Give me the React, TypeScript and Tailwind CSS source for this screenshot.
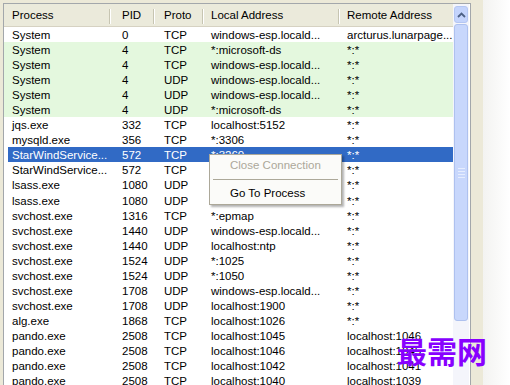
import React from "react";

type Row = {
  proc: string;
  pid: string;
  proto: string;
  local: string;
  remote: string;
  tone?: "green" | "selected";
};

const rows: Row[] = [
  { proc: "System", pid: "0", proto: "TCP", local: "windows-esp.locald...", remote: "arcturus.lunarpage..." },
  { proc: "System", pid: "4", proto: "TCP", local: "*:microsoft-ds", remote: "*:*", tone: "green" },
  { proc: "System", pid: "4", proto: "TCP", local: "windows-esp.locald...", remote: "*:*", tone: "green" },
  { proc: "System", pid: "4", proto: "UDP", local: "windows-esp.locald...", remote: "*:*", tone: "green" },
  { proc: "System", pid: "4", proto: "UDP", local: "windows-esp.locald...", remote: "*:*", tone: "green" },
  { proc: "System", pid: "4", proto: "UDP", local: "*:microsoft-ds", remote: "*:*", tone: "green" },
  { proc: "jqs.exe", pid: "332", proto: "TCP", local: "localhost:5152", remote: "*:*" },
  { proc: "mysqld.exe", pid: "356", proto: "TCP", local: "*:3306", remote: "*:*" },
  { proc: "StarWindService...", pid: "572", proto: "TCP", local: "*:3260", remote: "*:*", tone: "selected" },
  { proc: "StarWindService...", pid: "572", proto: "TCP", local: "*:3261", remote: "*:*" },
  { proc: "lsass.exe", pid: "1080", proto: "UDP", local: "*:500", remote: "*:*" },
  { proc: "lsass.exe", pid: "1080", proto: "UDP", local: "*:4500", remote: "*:*" },
  { proc: "svchost.exe", pid: "1316", proto: "TCP", local: "*:epmap", remote: "*:*" },
  { proc: "svchost.exe", pid: "1440", proto: "UDP", local: "windows-esp.locald...", remote: "*:*" },
  { proc: "svchost.exe", pid: "1440", proto: "UDP", local: "localhost:ntp", remote: "*:*" },
  { proc: "svchost.exe", pid: "1524", proto: "UDP", local: "*:1025", remote: "*:*" },
  { proc: "svchost.exe", pid: "1524", proto: "UDP", local: "*:1050", remote: "*:*" },
  { proc: "svchost.exe", pid: "1708", proto: "UDP", local: "windows-esp.locald...", remote: "*:*" },
  { proc: "svchost.exe", pid: "1708", proto: "UDP", local: "localhost:1900", remote: "*:*" },
  { proc: "alg.exe", pid: "1868", proto: "TCP", local: "localhost:1026", remote: "*:*" },
  { proc: "pando.exe", pid: "2508", proto: "TCP", local: "localhost:1045", remote: "localhost:1046" },
  { proc: "pando.exe", pid: "2508", proto: "TCP", local: "localhost:1046", remote: "localhost:1045" },
  { proc: "pando.exe", pid: "2508", proto: "TCP", local: "localhost:1042", remote: "localhost:1041" },
  { proc: "pando.exe", pid: "2508", proto: "TCP", local: "localhost:1040", remote: "localhost:1039" },
];

function HeaderCell({ label, pad, divider = true }: { label: string; pad: string; divider?: boolean }) {
  return (
    <div className={`flex items-center justify-between pt-[2px] ${pad}`}>
      <span>{label}</span>
      {divider && <span className="w-[2px] h-[15px] border-l border-[#c7c5b2] border-r border-r-white" />}
    </div>
  );
}

function DataRow({ row }: { row: Row }) {
  const selected = row.tone === "selected";
  const tone = selected
    ? "ml-[4px] grid-cols-[103px_44px_49px_136px_109px] bg-[#316ac5] text-white"
    : row.tone === "green"
    ? "grid-cols-[107px_44px_49px_136px_113px] bg-[#e4f8de] text-black"
    : "grid-cols-[107px_44px_49px_136px_113px] text-black";
  return (
    <div className={`grid shrink-0 h-[15.05px] leading-[17px] whitespace-nowrap ${tone}`}>
      <div className={`overflow-hidden ${selected ? "pl-[4px]" : "pl-[8px]"}`}>{row.proc}</div>
      <div className="overflow-hidden pl-[11px]">{row.pid}</div>
      <div className="overflow-hidden pl-[9px]">{row.proto}</div>
      <div className="overflow-hidden pl-[7px]">{row.local}</div>
      <div className="overflow-hidden pl-[7px]">{row.remote}</div>
    </div>
  );
}

function Scrollbar() {
  return (
    <div className="w-[17px] shrink-0 bg-[#f4f5fb] flex flex-col px-[1px] pt-[2px] border-r border-r-white">
      {/* up button */}
      <div className="shrink-0 h-[17px] rounded-[3px] border border-[#b4c6f2] bg-[#c4d4fc] flex items-center justify-center">
        <svg width="9" height="6" viewBox="0 0 9 6">
          <path d="M1 5 L4.5 1.5 L8 5" fill="none" stroke="#4d6185" strokeWidth="1.8" />
        </svg>
      </div>
      {/* thumb */}
      <div className="shrink-0 mt-[1px] h-[297px] rounded-[3px] border border-[#aec1ef] bg-[#c8d7fc] flex flex-col items-center justify-center gap-[2px]">
        <span className="w-[7px] h-px bg-[#e6edfe]" />
        <span className="w-[7px] h-px bg-[#e6edfe]" />
        <span className="w-[7px] h-px bg-[#e6edfe]" />
        <span className="w-[7px] h-px bg-[#e6edfe]" />
      </div>
    </div>
  );
}

export default function App() {
  return (
    <div className="relative w-[510px] h-[385px] overflow-hidden flex bg-[#ece9d8] font-['Liberation_Sans',Arial,sans-serif] text-[11.5px] text-black">
      <div className="w-[3px] shrink-0" />

      {/* list frame */}
      <div className="mt-[3px] w-[468px] shrink-0 flex border-l border-t border-r border-[#a3a7ab] bg-white">
        <div className="w-[449px] shrink-0 flex flex-col overflow-hidden">
          <div className="grid shrink-0 grid-cols-[107px_44px_49px_136px_113px] h-[23px] bg-[#ebeadb] border-b border-[#d6d2c2]">
            <HeaderCell label="Process" pad="pl-[8px]" />
            <HeaderCell label="PID" pad="pl-[11px]" />
            <HeaderCell label="Proto" pad="pl-[9px]" />
            <HeaderCell label="Local Address" pad="pl-[7px]" />
            <HeaderCell label="Remote Address" pad="pl-[7px]" divider={false} />
          </div>
          {rows.map((r, i) => (
            <DataRow key={i} row={r} />
          ))}
        </div>
        <Scrollbar />
      </div>

      <div className="w-[12px] shrink-0" />
      <div className="flex-1 bg-gradient-to-r from-[#f3f3f1] to-white" />

      {/* context menu */}
      <div className="absolute left-[209px] top-[154px] w-[133px] border border-[#aca899] bg-[#fbfbf9] shadow-[2px_2px_2px_rgba(0,0,0,0.3)] flex flex-col">
        <div className="h-[21px] leading-[21px] pl-[20px] text-[#aca899]">Close Connection</div>
        <div className="h-[6px] flex items-center px-[3px]">
          <div className="w-full h-px bg-[#aca899]" />
        </div>
        <div className="h-[22px] leading-[22px] pl-[20px]">Go To Process</div>
      </div>

      {/* watermark */}
      <div className="absolute left-[397px] top-[335px] leading-none text-[30px] font-semibold text-[#8800ff] font-['Noto_Sans_CJK_SC',sans-serif]">
        最需网
      </div>
    </div>
  );
}
